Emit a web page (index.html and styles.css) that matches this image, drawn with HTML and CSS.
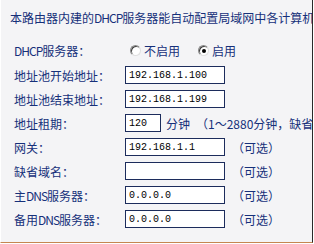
FILE: index.html
```html
<!DOCTYPE html>
<html lang="zh-CN">
<head>
    <meta charset="UTF-8">
    <title>DHCP服务</title>
    <link rel="stylesheet" href="styles.css">
</head>
<body>
    <div class="panel">
        <p class="intro">本路由器内建的<span class="latin">DHCP</span>服务器能自动配置局域网中各计算机的TCP/IP协议。</p>

        <form class="dhcp-form">
            <div class="row row-switch">
                <label class="label"><span class="latin">DHCP</span>服务器：</label>
                <label class="radio"><input type="radio" name="dhcp" value="0">不启用</label>
                <label class="radio"><input type="radio" name="dhcp" value="1" checked>启用</label>
            </div>
            <div class="row">
                <label class="label">地址池开始地址：</label>
                <input class="field" type="text" value="192.168.1.100">
            </div>
            <div class="row">
                <label class="label">地址池结束地址：</label>
                <input class="field" type="text" value="192.168.1.199">
            </div>
            <div class="row">
                <label class="label">地址租期：</label>
                <input class="field short" type="text" value="120">
                <span class="unit">分钟</span>
                <span class="hint">（1～2880分钟，缺省为120分钟）</span>
            </div>
            <div class="row">
                <label class="label">网关：</label>
                <input class="field" type="text" value="192.168.1.1">
                <span class="note">（可选）</span>
            </div>
            <div class="row">
                <label class="label">缺省域名：</label>
                <input class="field" type="text" value="">
                <span class="note">（可选）</span>
            </div>
            <div class="row">
                <label class="label">主<span class="latin">DNS</span>服务器：</label>
                <input class="field" type="text" value="0.0.0.0">
                <span class="note">（可选）</span>
            </div>
            <div class="row">
                <label class="label">备用<span class="latin">DNS</span>服务器：</label>
                <input class="field" type="text" value="0.0.0.0">
                <span class="note">（可选）</span>
            </div>
        </form>
    </div>
</body>
</html>
```

FILE: styles.css
```css
body {
    margin: 0;
    background: #ffffff;
    font-family: "Noto Sans CJK SC", "Noto Sans", sans-serif;
    font-size: 12px;
    color: #16307a;
}
.panel {
    width: 311px;
    height: 242px;
    background: #f4f4f6;
    border-left: 1px solid #ffffff;
    border-right: 1px solid #2a2a2a;
    border-bottom: 1px solid #c58650;
    overflow: hidden;
}
.intro {
    margin: 0;
    padding: 10px 0 0 9px;
    line-height: 16px;
    white-space: nowrap;
}
/* narrow half-width latin, like the old bitmap font */
.latin {
    letter-spacing: -1px;
}
.dhcp-form {
    margin: 12px 0 0 13px;
}
.row {
    display: flex;
    align-items: center;
    height: 24px;
    white-space: nowrap;
}
.row-switch {
    height: 25px;
}
.label {
    width: 111px;
    flex-shrink: 0;
}
.radio {
    display: flex;
    align-items: center;
    margin-right: 13px;
}
.radio input {
    appearance: none;
    width: 11px;
    height: 11px;
    margin: 0 3px 0 5px;
    border-radius: 50%;
    border: 1px solid #8a8a8a;
    border-right-color: #e0e0e0;
    border-bottom-color: #e0e0e0;
    background: #ffffff;
    box-shadow: inset 1px 1px 0 #404040;
    display: grid;
    place-items: center;
}
.radio input:checked::after {
    content: "";
    width: 4px;
    height: 4px;
    border-radius: 50%;
    background: #000000;
}
.field {
    box-sizing: border-box;
    width: 100px;
    height: 18px;
    margin: 0;
    padding: 0 3px;
    border: 1px solid #1c2c5c;
    background: #ffffff;
    font-family: "Liberation Mono", monospace;
    font-size: 10px;
    color: #000000;
    flex-shrink: 0;
}
.field.short {
    width: 36px;
}
.unit {
    margin-left: 5px;
}
.hint {
    margin-left: 6px;
}
.note {
    margin-left: 7px;
}
```
